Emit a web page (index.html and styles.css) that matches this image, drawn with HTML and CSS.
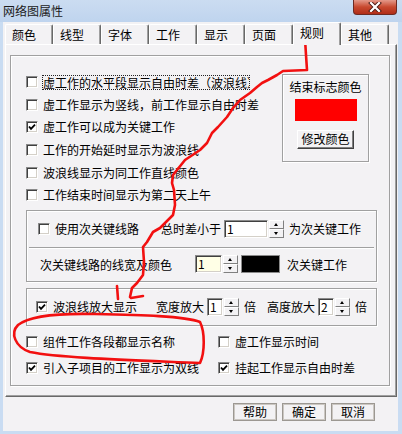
FILE: index.html
```html
<!DOCTYPE html>
<html lang="zh-CN">

<head>
    <meta charset="UTF-8">
    <title>网络图属性</title>
    <link rel="stylesheet" href="styles.css">
</head>

<body>
    <div class="window">
        <div class="titlebar">
            <span class="title">网络图属性</span>
            <div class="close-btn">
                <svg width="14" height="10" viewBox="0 0 14 10">
                    <path d="M3 1 L11 9 M11 1 L3 9" stroke="#4a1a14" stroke-width="4" stroke-linecap="square"/>
                    <path d="M3 1 L11 9 M11 1 L3 9" stroke="#fff" stroke-width="2.2" stroke-linecap="square"/>
                </svg>
            </div>
        </div>

        <div class="client">
            <div class="tabs">
                <div class="tab">颜色</div>
                <div class="tab">线型</div>
                <div class="tab">字体</div>
                <div class="tab">工作</div>
                <div class="tab">显示</div>
                <div class="tab">页面</div>
                <div class="tab active">规则</div>
                <div class="tab">其他</div>
            </div>

            <div class="panel">
                <div class="rules">
                    <div class="rules-top">
                        <div class="check-list">
                            <div class="check"><span class="box"></span><span class="focus-text">虚工作的水平段显示自由时差（波浪线）</span></div>
                            <div class="check"><span class="box"></span><span>虚工作显示为竖线，前工作显示自由时差</span></div>
                            <div class="check"><span class="box checked"><svg width="8" height="8" viewBox="0 0 8 8"><path d="M1 3.5 L3 5.8 L7 1.6" stroke="#000" stroke-width="1.8" fill="none"/></svg></span><span>虚工作可以成为关键工作</span></div>
                            <div class="check"><span class="box"></span><span>工作的开始延时显示为波浪线</span></div>
                            <div class="check"><span class="box"></span><span>波浪线显示为同工作直线颜色</span></div>
                            <div class="check"><span class="box"></span><span>工作结束时间显示为第二天上午</span></div>
                        </div>
                        <div class="endmark">
                            <div class="endmark-title">结束标志颜色</div>
                            <div class="endmark-swatch"></div>
                            <div class="btn3d">修改颜色</div>
                        </div>
                    </div>

                    <div class="group sub">
                        <div class="group-row row-top">
                            <div class="check"><span class="box"></span><span>使用次关键线路</span></div>
                            <span class="label-total">总时差小于</span>
                            <span class="field field-total">1</span>
                            <span class="spin"><span class="spin-up"></span><span class="spin-down"></span></span>
                            <span class="label-after">为次关键工作</span>
                        </div>
                        <div class="group-row row-bottom">
                            <span class="label-width">次关键线路的线宽及颜色</span>
                            <span class="field field-width">1</span>
                            <span class="spin"><span class="spin-up"></span><span class="spin-down"></span></span>
                            <span class="swatch-black"></span>
                            <span class="label-after">次关键工作</span>
                        </div>
                    </div>

                    <div class="group wave">
                        <div class="check"><span class="box checked"><svg width="8" height="8" viewBox="0 0 8 8"><path d="M1 3.5 L3 5.8 L7 1.6" stroke="#000" stroke-width="1.8" fill="none"/></svg></span><span>波浪线放大显示</span></div>
                        <span class="label-scale">宽度放大</span>
                        <span class="field field-small">1</span>
                        <span class="spin"><span class="spin-up"></span><span class="spin-down"></span></span>
                        <span class="label-times">倍</span>
                        <span class="label-scale second">高度放大</span>
                        <span class="field field-small">2</span>
                        <span class="spin"><span class="spin-up"></span><span class="spin-down"></span></span>
                        <span class="label-times">倍</span>
                    </div>

                    <div class="bottom-checks">
                        <div class="check"><span class="box"></span><span>组件工作各段都显示名称</span></div>
                        <div class="check"><span class="box"></span><span>虚工作显示时间</span></div>
                        <div class="check"><span class="box checked"><svg width="8" height="8" viewBox="0 0 8 8"><path d="M1 3.5 L3 5.8 L7 1.6" stroke="#000" stroke-width="1.8" fill="none"/></svg></span><span>引入子项目的工作显示为双线</span></div>
                        <div class="check"><span class="box checked"><svg width="8" height="8" viewBox="0 0 8 8"><path d="M1 3.5 L3 5.8 L7 1.6" stroke="#000" stroke-width="1.8" fill="none"/></svg></span><span>挂起工作显示自由时差</span></div>
                    </div>
                </div>
            </div>

            <div class="buttons">
                <div class="btn">帮助</div>
                <div class="btn">确定</div>
                <div class="btn">取消</div>
            </div>
        </div>

        <!-- red hand-drawn marks over the dialog -->
        <svg class="annotation" width="402" height="434" viewBox="0 0 402 434">
            <path d="M305 39 L306 55 L307 70 L283 71 L277 75 L268 80 L262 83 L257 87 L250 93 L240 100 L233 108 L227 117 L218 127 L212 133 L207 143 L200 150 L185 160 L173 175 L172 183 L174 190 L175 205 L173 215 L160 228 L153 232 L147 242 L143 247 L144 262 L143 275 L137 283 L132 288 L130 297"/>
            <path d="M117 286 L118 299 M131 298 L143 296"/>
            <path d="M200 322 C185 316 140 315 95 314 C55 313 28 317 18 325 C10 333 15 347 30 352 C60 358 130 360 200 363 C205 352 205 332 200 322"/>
        </svg>
    </div>
</body>

</html>
```

FILE: styles.css
```css
* {
    box-sizing: border-box;
}

html,
body {
    margin: 0;
}

body {
    width: 402px;
    height: 434px;
    overflow: hidden;
    font-family: "Noto Sans CJK SC", "Noto Sans", sans-serif;
    font-size: 12px;
    color: #000;
}

.window {
    position: relative;
    width: 402px;
    height: 434px;
    display: flex;
    flex-direction: column;
    background: #c9dcf2;
}

/* title bar */
.titlebar {
    height: 22px;
    flex: none;
    display: flex;
    align-items: flex-start;
    padding-left: 3px;
    background: linear-gradient(#cbdcf1, #bfd4ee);
}

.title {
    margin-top: 3px;
    line-height: 16px;
    color: #1b1b1b;
}

.close-btn {
    margin-left: auto;
    margin-right: 5px;
    width: 44px;
    height: 15px;
    display: flex;
    align-items: center;
    justify-content: center;
    border: 1px solid #6d2a22;
    border-top: none;
    border-radius: 0 0 4px 4px;
    background: linear-gradient(#e4998a, #c8492f 50%, #b02d18);
}

.client {
    flex: 1;
    margin: 0 4px 3px 3px;
    background: #f3f2f4;
}

/* tabs */
.tabs {
    display: flex;
    align-items: flex-end;
    height: 22px;
    padding-left: 2px;
}

.tab {
    width: 48px;
    height: 20px;
    padding: 3px 0 0 6px;
    line-height: 14px;
    border-top: 1px solid #fff;
    border-left: 1px solid #fff;
    border-right: 1px solid #696969;
    border-radius: 2px 2px 0 0;
    box-shadow: inset -1px 0 #a0a0a0;
    background: #f3f2f4;
}

.tab.active {
    position: relative;
    z-index: 1;
    height: 23px;
    margin-bottom: -1px;
}

.panel {
    margin-left: 2px;
    width: 392px;
    height: 353px;
    border: 1px solid;
    border-color: #fff #696969 #696969 #fff;
    box-shadow: inset -1px -1px #a0a0a0;
}

/* etched group boxes */
.rules,
.group,
.endmark {
    border: 1px solid #a0a0a0;
    box-shadow: 1px 1px 0 #fff, inset 1px 1px 0 #fff;
}

.rules {
    margin: 10px 0 0 4px;
    width: 380px;
    height: 331px;
}

.rules-top {
    display: flex;
    align-items: flex-start;
    padding: 15px 0 0 15px;
}

.check-list {
    width: 256px;
}

.check {
    display: flex;
    align-items: center;
    gap: 5px;
    height: 22.6px;
    white-space: nowrap;
    line-height: 14px;
}

.box {
    flex: none;
    width: 12px;
    height: 12px;
    display: flex;
    align-items: center;
    justify-content: center;
    background: #fff;
    border: 1px solid;
    border-color: #8a8a8a #fff #fff #8a8a8a;
    box-shadow: inset 1px 1px #404040, inset -1px -1px #d4d0c8;
}

.focus-text {
    width: 208px;
    margin-left: -1px;
    overflow: hidden;
    border: 1px dotted #222;
    line-height: 13px;
}

.endmark {
    margin-top: 3px;
    width: 87px;
    height: 88px;
    display: flex;
    flex-direction: column;
    align-items: center;
    padding-top: 5px;
}

.endmark-title {
    line-height: 14px;
}

.endmark-swatch {
    margin-top: 5px;
    width: 62px;
    height: 22px;
    background: #ff0000;
}

.btn3d {
    margin-top: 9px;
    width: 57px;
    height: 19px;
    text-align: center;
    line-height: 16px;
    border: 1px solid;
    border-color: #fff #404040 #404040 #fff;
    box-shadow: inset -1px -1px #808080;
}

/* sub-critical path box */
.sub {
    margin: 3.4px 0 0 15px;
    width: 351px;
    height: 72px;
}

.group-row {
    display: flex;
    align-items: center;
    white-space: nowrap;
}

.row-top {
    height: 37px;
    padding-left: 9px;
    margin: 0 2px;
    border-bottom: 1px solid #a0a0a0;
    box-shadow: 0 1px 0 #fff;
}

.row-bottom {
    height: 33px;
    padding-left: 13px;
}

.label-total {
    margin-left: 22px;
}

.field {
    height: 18px;
    padding-left: 2px;
    line-height: 15px;
    background: #fff;
    border: 1px solid;
    border-color: #8a8a8a #fff #fff #8a8a8a;
    box-shadow: inset 1px 1px #404040, inset -1px -1px #d4d0c8;
}

.field-total {
    margin-left: 3px;
    width: 44px;
}

.field-width {
    margin-left: 23px;
    width: 27px;
    background: #ffffe6;
}

.field-small {
    margin-left: 3px;
    width: 16px;
}

.spin {
    margin-left: 1px;
    width: 15px;
    height: 18px;
    display: flex;
    flex-direction: column;
}

.spin-up,
.spin-down {
    position: relative;
    flex: 1;
    border: 1px solid;
    border-color: #fff #808080 #808080 #fff;
    background: #f3f2f4;
}

.spin-up::after,
.spin-down::after {
    content: "";
    position: absolute;
    left: 4px;
    top: 2px;
    border-left: 2.5px solid transparent;
    border-right: 2.5px solid transparent;
}

.spin-up::after {
    border-bottom: 3px solid #000;
}

.spin-down::after {
    border-top: 3px solid #000;
}

.label-after {
    margin-left: 5px;
}

.swatch-black {
    margin-left: 3px;
    width: 39px;
    height: 18px;
    background: #000;
    border: 1px solid #8a8a8a;
}

.row-bottom .label-after {
    margin-left: 7px;
}

/* wave magnification box */
.wave {
    margin: 6px 0 0 15px;
    width: 351px;
    height: 38px;
    display: flex;
    align-items: center;
    padding-left: 9px;
    white-space: nowrap;
}

.label-scale {
    margin-left: 19px;
}

.label-scale.second {
    margin-left: 11px;
}

.label-times {
    margin-left: 5px;
}

.bottom-checks {
    display: grid;
    grid-template-columns: 192px auto;
    grid-auto-rows: 26px;
    margin-top: 3px;
    padding-left: 15px;
}

.bottom-checks .check {
    height: 26px;
}

/* dialog buttons */
.buttons {
    display: flex;
    justify-content: flex-end;
    gap: 5px;
    margin-top: 6px;
    padding-right: 23px;
}

.btn {
    width: 44px;
    height: 18px;
    text-align: center;
    line-height: 15px;
    border: 1px solid #9c9892;
    box-shadow: inset 0 0 0 1px #cbc7c2;
}

.annotation {
    position: absolute;
    top: 0;
    left: 0;
    pointer-events: none;
}

.annotation path {
    fill: none;
    stroke: #f21010;
    stroke-width: 2.6;
    stroke-linecap: round;
    stroke-linejoin: round;
}
```
